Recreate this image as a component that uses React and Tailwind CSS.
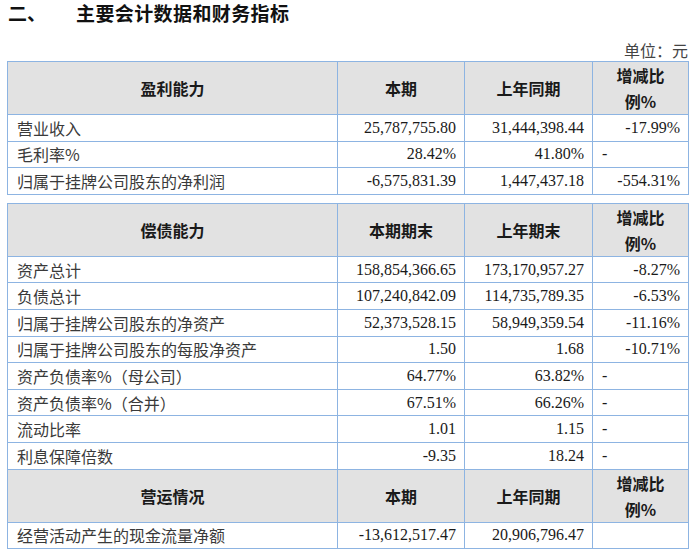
const profit = [
  ['营业收入', '25,787,755.80', '31,444,398.44', '-17.99%'],
  ['毛利率%', '28.42%', '41.80%', '-'],
  ['归属于挂牌公司股东的净利润', '-6,575,831.39', '1,447,437.18', '-554.31%'],
];

const debt = [
  ['资产总计', '158,854,366.65', '173,170,957.27', '-8.27%'],
  ['负债总计', '107,240,842.09', '114,735,789.35', '-6.53%'],
  ['归属于挂牌公司股东的净资产', '52,373,528.15', '58,949,359.54', '-11.16%'],
  ['归属于挂牌公司股东的每股净资产', '1.50', '1.68', '-10.71%'],
  ['资产负债率%（母公司）', '64.77%', '63.82%', '-'],
  ['资产负债率%（合并）', '67.51%', '66.26%', '-'],
  ['流动比率', '1.01', '1.15', '-'],
  ['利息保障倍数', '-9.35', '18.24', '-'],
];

const ops = [['经营活动产生的现金流量净额', '-13,612,517.47', '20,906,796.47', '']];

const cell = 'border border-[#8db4e2] p-0';
const cjk = "font-['Noto_Sans_CJK_SC',sans-serif]";
const num = "font-['Liberation_Serif','Noto_Sans_CJK_SC',serif]";

function Header({ title, a, b }) {
  return (
    <tr className="h-[52px] bg-[#e2e2e2] text-[16px] font-bold text-[#1a1a1a]">
      <td className={`${cell} text-center ${cjk}`}>{title}</td>
      <td className={`${cell} text-center ${cjk}`}>{a}</td>
      <td className={`${cell} text-center ${cjk}`}>{b}</td>
      <td className={`${cell} text-center leading-[26px] ${cjk}`}>
        增减比
        <br />
        例%
      </td>
    </tr>
  );
}

function Row({ r }) {
  const dash = r[3] === '-' || r[3] === '';
  return (
    <tr className="h-[26.6px] text-[16px] leading-[22px]">
      <td className={`${cell} pl-[9px] text-[#3a3a3a] ${cjk}`}>{r[0]}</td>
      <td className={`${cell} pr-[8px] text-right text-[#1a1a1a] ${num}`}>{r[1]}</td>
      <td className={`${cell} pr-[8px] text-right text-[#1a1a1a] ${num}`}>{r[2]}</td>
      <td
        className={`${cell} text-[#1a1a1a] ${num} ${
          dash ? 'pl-[9px] text-left' : 'pr-[8px] text-right'
        }`}
      >
        {r[3]}
      </td>
    </tr>
  );
}

function Cols() {
  return (
    <colgroup>
      <col className="w-[330px]" />
      <col className="w-[127px]" />
      <col className="w-[128px]" />
      <col className="w-[96px]" />
    </colgroup>
  );
}

export default function App() {
  return (
    <div className="w-[692px] h-[553px] bg-white overflow-hidden">
      <div
        className={`flex h-[24px] items-start pt-[3px] pl-[8px] text-[19px] leading-[19px] font-bold text-[#111] ${cjk}`}
      >
        <span className="w-[68px]">二、</span>
        <span className="tracking-[0.4px]">主要会计数据和财务指标</span>
      </div>
      <div className={`mt-[16px] h-[20px] pr-[4px] text-right text-[16px] leading-[20px] text-[#444] ${cjk}`}>
        单位：元
      </div>
      <div className="pl-[7px] pt-[1px]">
        <table className="w-[681px] table-fixed border-collapse">
          <Cols />
          <tbody>
            <Header title="盈利能力" a="本期" b="上年同期" />
            {profit.map((r) => (
              <Row key={r[0]} r={r} />
            ))}
          </tbody>
        </table>
        <table className="mt-[8px] w-[681px] table-fixed border-collapse">
          <Cols />
          <tbody>
            <Header title="偿债能力" a="本期期末" b="上年期末" />
            {debt.map((r) => (
              <Row key={r[0]} r={r} />
            ))}
            <Header title="营运情况" a="本期" b="上年同期" />
            {ops.map((r) => (
              <Row key={r[0]} r={r} />
            ))}
          </tbody>
        </table>
      </div>
    </div>
  );
}
